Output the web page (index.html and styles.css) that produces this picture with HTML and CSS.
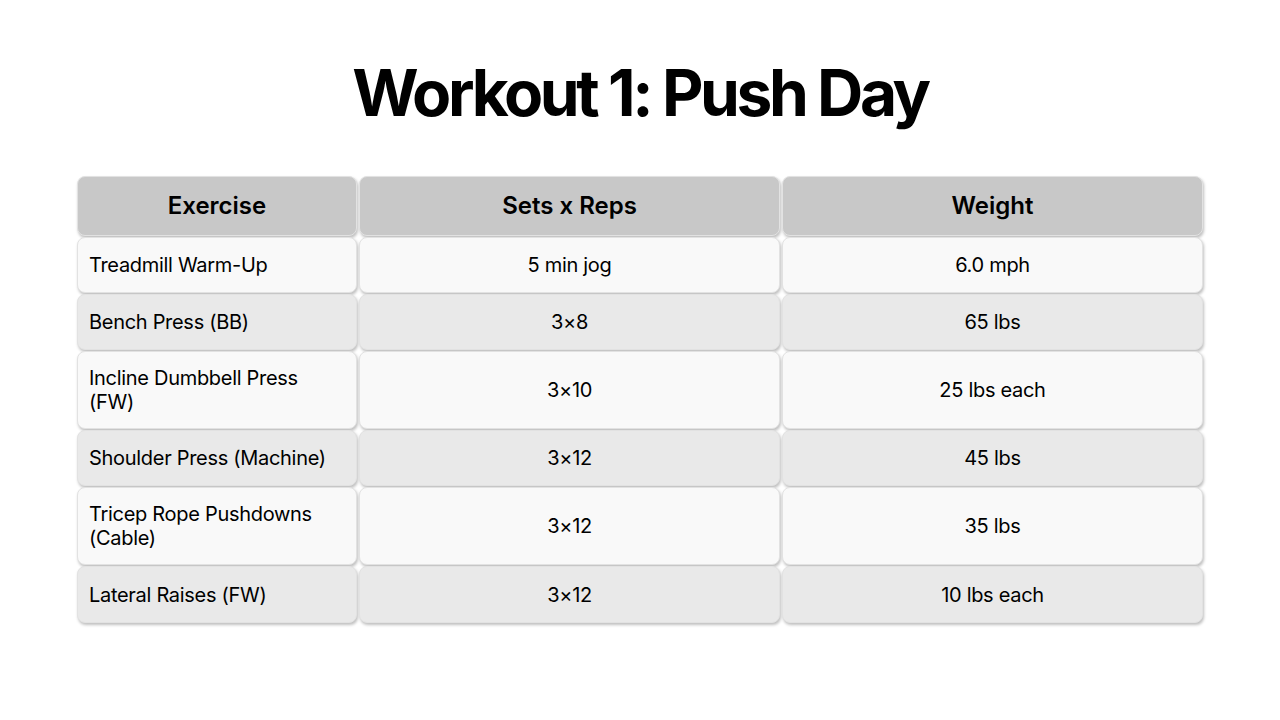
FILE: index.html
```html
<!DOCTYPE html>
<html>
<head>
<meta charset="utf-8">
<link rel="stylesheet" href="styles.css">
</head>
<body>
<main class="slide">
  <h1 class="title">Workout 1: Push Day</h1>
  <div class="table">
    <div class="cell head">Exercise</div>
    <div class="cell head">Sets x Reps</div>
    <div class="cell head">Weight</div>

    <div class="cell light first">Treadmill Warm-Up</div>
    <div class="cell light">5 min jog</div>
    <div class="cell light">6.0 mph</div>

    <div class="cell dark first">Bench Press (BB)</div>
    <div class="cell dark">3×8</div>
    <div class="cell dark">65 lbs</div>

    <div class="cell light first">Incline Dumbbell Press<br>(FW)</div>
    <div class="cell light">3×10</div>
    <div class="cell light">25 lbs each</div>

    <div class="cell dark first">Shoulder Press (Machine)</div>
    <div class="cell dark">3×12</div>
    <div class="cell dark">45 lbs</div>

    <div class="cell light first">Tricep Rope Pushdowns<br>(Cable)</div>
    <div class="cell light">3×12</div>
    <div class="cell light">35 lbs</div>

    <div class="cell dark first">Lateral Raises (FW)</div>
    <div class="cell dark">3×12</div>
    <div class="cell dark">10 lbs each</div>
  </div>
</main>
</body>
</html>
```

FILE: styles.css
```css
* { box-sizing: border-box; }
html, body { margin: 0; padding: 0; background: #fff; }
body { font-family: Inter, "Liberation Sans", sans-serif; color: #000; }
.slide {
  width: 1280px;
  height: 720px;
  padding-top: 58px;
  display: flex;
  flex-direction: column;
  align-items: center;
}
.title {
  margin: 0;
  font-size: 64px;
  font-weight: 700;
  letter-spacing: -3.4px;
  line-height: 70px;
  height: 70px;
}
.table {
  margin-top: 48px;
  display: grid;
  grid-template-columns: 280px 421px 421px;
  grid-template-rows: 60px 56px 56px 78px 56px 78px 57px;
  gap: 1px 2px;
}
.cell {
  border-radius: 8px;
  border: 1px solid #e2e2e2;
  box-shadow: 1px 2px 3px rgba(0,0,0,0.25);
  display: flex;
  align-items: center;
  justify-content: center;
  text-align: center;
  font-size: 20px;
  line-height: 24px;
  letter-spacing: -0.3px;
}
.head {
  background: #c8c8c8;
  font-weight: 600;
  font-size: 24px;
  letter-spacing: 0;
}
.light { background: #f9f9f9; }
.dark { background: #e9e9e9; }
.first {
  justify-content: flex-start;
  text-align: left;
  padding-left: 11px;
}
.head.first { justify-content: center; padding-left: 0; }
```
